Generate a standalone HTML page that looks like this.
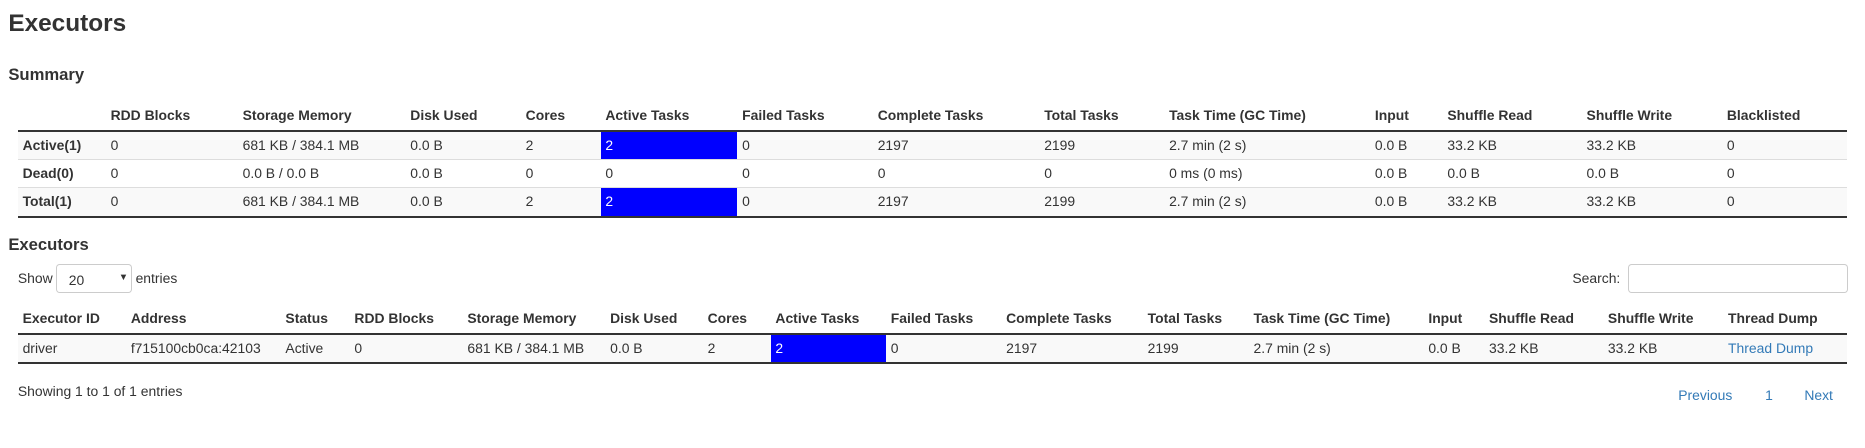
<!DOCTYPE html>
<html><head><meta charset="utf-8"><style>
html,body{margin:0;padding:0;background:#fff;}
body{width:1865px;height:448px;overflow:hidden;}
#w{zoom:1.1894;width:1568px;position:relative;font-family:"Liberation Sans",Arial,sans-serif;font-size:11.7px;color:#333;}
.a{position:absolute;white-space:nowrap;}
h1{position:absolute;left:7px;top:6px;margin:0;font-size:20.5px;font-weight:bold;line-height:28px;}
h4{position:absolute;margin:0;font-size:14px;font-weight:bold;line-height:18px;}
table{position:absolute;left:15px;border-collapse:collapse;table-layout:fixed;}
td,th{padding:0 0 0 4px;text-align:left;white-space:nowrap;overflow:hidden;height:23px;line-height:23px;}
th{font-weight:bold;height:24px;vertical-align:bottom;line-height:24px;}
thead tr{border-bottom:2px solid #333;}
tbody tr{border-top:1px solid #ddd;}
tbody tr:last-child{border-bottom:2px solid #333;}
tbody tr.s{background:#f9f9f9;}
td.b{background:#0000ff;color:#fff;}
.lbl td:first-child{font-weight:bold;}
a{color:#337ab7;text-decoration:none;}
.box{position:absolute;border:1px solid #ccc;border-radius:3px;background:#fff;}
</style></head><body><div id="w">
<h1>Executors</h1>
<h4 style="left:7px;top:54px">Summary</h4>
<table style="top:85px;width:1538px">
<colgroup><col style="width:74px"><col style="width:111px"><col style="width:141px"><col style="width:97px"><col style="width:67px"><col style="width:115px"><col style="width:114px"><col style="width:140px"><col style="width:105px"><col style="width:173px"><col style="width:61px"><col style="width:117px"><col style="width:118px"><col style="width:105px"></colgroup>
<thead><tr><th></th><th>RDD Blocks</th><th>Storage Memory</th><th>Disk Used</th><th>Cores</th><th>Active Tasks</th><th>Failed Tasks</th><th>Complete Tasks</th><th>Total Tasks</th><th>Task Time (GC Time)</th><th>Input</th><th>Shuffle Read</th><th>Shuffle Write</th><th>Blacklisted</th></tr></thead>
<tbody class="lbl">
<tr class="s"><td>Active(1)</td><td>0</td><td>681 KB / 384.1 MB</td><td>0.0 B</td><td>2</td><td class="b">2</td><td>0</td><td>2197</td><td>2199</td><td>2.7 min (2 s)</td><td>0.0 B</td><td>33.2 KB</td><td>33.2 KB</td><td>0</td></tr>
<tr><td>Dead(0)</td><td>0</td><td>0.0 B / 0.0 B</td><td>0.0 B</td><td>0</td><td>0</td><td>0</td><td>0</td><td>0</td><td>0 ms (0 ms)</td><td>0.0 B</td><td>0.0 B</td><td>0.0 B</td><td>0</td></tr>
<tr class="s"><td>Total(1)</td><td>0</td><td>681 KB / 384.1 MB</td><td>0.0 B</td><td>2</td><td class="b">2</td><td>0</td><td>2197</td><td>2199</td><td>2.7 min (2 s)</td><td>0.0 B</td><td>33.2 KB</td><td>33.2 KB</td><td>0</td></tr>
</tbody></table>
<h4 style="left:7px;top:197px">Executors</h4>
<div class="a" style="left:15px;top:227px">Show</div>
<div class="box" style="left:47px;top:222px;width:62px;height:23px"><span class="a" style="left:10px;top:6px">20</span><span class="a" style="left:52px;top:6px;font-size:8px">▼</span></div>
<div class="a" style="left:114px;top:227px">entries</div>
<div class="a" style="left:1322px;top:227px">Search:</div>
<div class="box" style="left:1369px;top:222px;width:183px;height:23px"></div>
<table style="top:256px;width:1538px">
<colgroup><col style="width:91px"><col style="width:130px"><col style="width:58px"><col style="width:95px"><col style="width:120px"><col style="width:82px"><col style="width:57px"><col style="width:97px"><col style="width:97px"><col style="width:119px"><col style="width:89px"><col style="width:147px"><col style="width:51px"><col style="width:100px"><col style="width:101px"><col style="width:104px"></colgroup>
<thead><tr><th>Executor ID</th><th>Address</th><th>Status</th><th>RDD Blocks</th><th>Storage Memory</th><th>Disk Used</th><th>Cores</th><th>Active Tasks</th><th>Failed Tasks</th><th>Complete Tasks</th><th>Total Tasks</th><th>Task Time (GC Time)</th><th>Input</th><th>Shuffle Read</th><th>Shuffle Write</th><th>Thread Dump</th></tr></thead>
<tbody><tr class="s"><td>driver</td><td>f715100cb0ca:42103</td><td>Active</td><td>0</td><td>681 KB / 384.1 MB</td><td>0.0 B</td><td>2</td><td class="b">2</td><td>0</td><td>2197</td><td>2199</td><td>2.7 min (2 s)</td><td>0.0 B</td><td>33.2 KB</td><td>33.2 KB</td><td><a>Thread Dump</a></td></tr></tbody></table>
<div class="a" style="left:15px;top:322px">Showing 1 to 1 of 1 entries</div>
<a class="a" style="left:1411px;top:325px">Previous</a>
<a class="a" style="left:1484px;top:325px">1</a>
<a class="a" style="left:1517px;top:325px">Next</a>
</div></body></html>
